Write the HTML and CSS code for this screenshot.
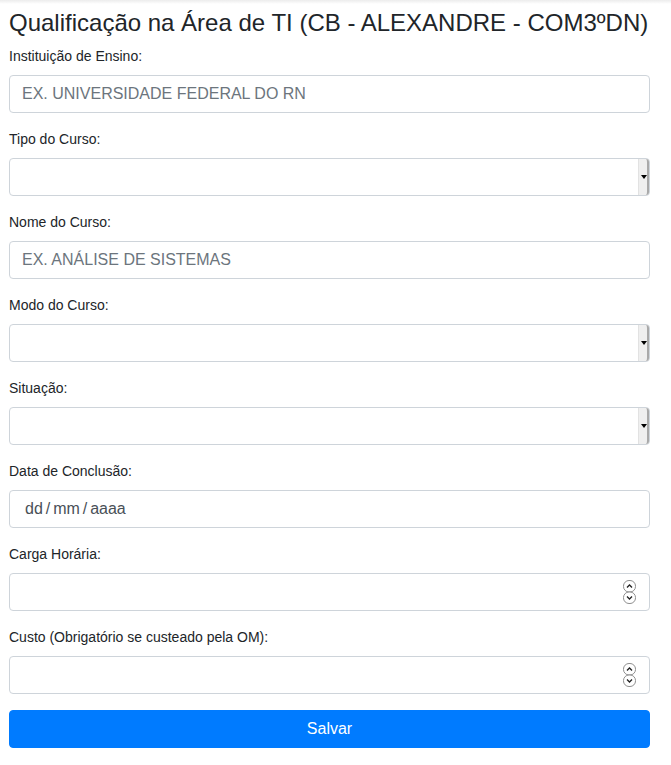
FILE: index.html
```html
<!DOCTYPE html>
<html lang="pt-BR">
<head>
<meta charset="utf-8">
<title>Qualificação</title>
<link rel="stylesheet" href="styles.css">
</head>
<body>
<main class="page">
  <h4 class="title">Qualificação na Área de TI (CB - ALEXANDRE - COM3ºDN)</h4>
  <form class="form">
    <div class="group">
      <label class="label">Instituição de Ensino:</label>
      <div class="field"><span class="ph">EX. UNIVERSIDADE FEDERAL DO RN</span></div>
    </div>
    <div class="group">
      <label class="label">Tipo do Curso:</label>
      <div class="field select"><span class="arrow"></span></div>
    </div>
    <div class="group">
      <label class="label">Nome do Curso:</label>
      <div class="field"><span class="ph">EX. ANÁLISE DE SISTEMAS</span></div>
    </div>
    <div class="group">
      <label class="label">Modo do Curso:</label>
      <div class="field select"><span class="arrow"></span></div>
    </div>
    <div class="group">
      <label class="label">Situação:</label>
      <div class="field select"><span class="arrow"></span></div>
    </div>
    <div class="group">
      <label class="label">Data de Conclusão:</label>
      <div class="field"><span class="date">dd / mm / aaaa</span></div>
    </div>
    <div class="group">
      <label class="label">Carga Horária:</label>
      <div class="field number">
        <svg class="spin" width="13" height="24" viewBox="0 0 13 24">
          <rect x="0.5" y="0.5" width="12" height="11.5" rx="5.5" fill="#fff" stroke="#8f8f8f"/>
          <rect x="0.5" y="12" width="12" height="11.5" rx="5.5" fill="#fff" stroke="#8f8f8f"/>
          <path d="M4 7.5 L6.5 5 L9 7.5" fill="none" stroke="#222" stroke-width="1.3"/>
          <path d="M4 16.5 L6.5 19 L9 16.5" fill="none" stroke="#222" stroke-width="1.3"/>
        </svg>
      </div>
    </div>
    <div class="group">
      <label class="label">Custo (Obrigatório se custeado pela OM):</label>
      <div class="field number">
        <svg class="spin" width="13" height="24" viewBox="0 0 13 24">
          <rect x="0.5" y="0.5" width="12" height="11.5" rx="5.5" fill="#fff" stroke="#8f8f8f"/>
          <rect x="0.5" y="12" width="12" height="11.5" rx="5.5" fill="#fff" stroke="#8f8f8f"/>
          <path d="M4 7.5 L6.5 5 L9 7.5" fill="none" stroke="#222" stroke-width="1.3"/>
          <path d="M4 16.5 L6.5 19 L9 16.5" fill="none" stroke="#222" stroke-width="1.3"/>
        </svg>
      </div>
    </div>
    <button type="button" class="btn">Salvar</button>
  </form>
</main>
</body>
</html>
```
FILE: styles.css
```css
html, body {
  margin: 0;
  padding: 0;
}
body {
  background: linear-gradient(#ececec, #fff 4px) no-repeat, #fff;
  font-family: "Liberation Sans", Arial, sans-serif;
  color: #212529;
  font-size: 14px;
  line-height: 1.5;
}
.page {
  width: 641px;
  padding: 9px 0 0 9px;
}
.title {
  margin: 0 0 8px 0;
  font-size: 24px;
  font-weight: 500;
  line-height: 1.2;
  white-space: nowrap;
}
.form {
  display: flex;
  flex-direction: column;
}
.group {
  display: flex;
  flex-direction: column;
  margin-bottom: 16px;
}
.label {
  display: block;
  margin-bottom: 8px;
  font-size: 14px;
  line-height: 21px;
}
.field {
  box-sizing: border-box;
  height: 38px;
  border: 1px solid #ced4da;
  border-radius: 4px;
  background: #fff;
  display: flex;
  align-items: center;
  padding: 0 12px;
  font-size: 16px;
}
.ph {
  color: #6c757d;
}
.date {
  color: #495057;
  padding-left: 3px;
  font-size: 16px;
  word-spacing: -1.5px;
}
.select {
  justify-content: flex-end;
  padding: 0;
}
.arrow {
  box-sizing: border-box;
  width: 11px;
  height: 36px;
  background: #efefef;
  border-left: 1px solid #e2e2e2;
  border-right: 2px solid #a9a9a9;
  display: flex;
  align-items: center;
  justify-content: center;
  border-radius: 0 3px 3px 0;
}
.arrow::after {
  content: "";
  border-left: 3px solid transparent;
  border-right: 3px solid transparent;
  border-top: 4px solid #000;
  margin-left: 1px;
}
.number {
  justify-content: flex-end;
  padding-right: 13px;
}
.spin {
  display: block;
}
.btn {
  box-sizing: border-box;
  height: 38px;
  border: 1px solid #007bff;
  border-radius: 4px;
  background: #007bff;
  color: #fff;
  font-family: "Liberation Sans", Arial, sans-serif;
  font-size: 16px;
  line-height: 1.5;
  padding: 0;
  width: 100%;
}
```
